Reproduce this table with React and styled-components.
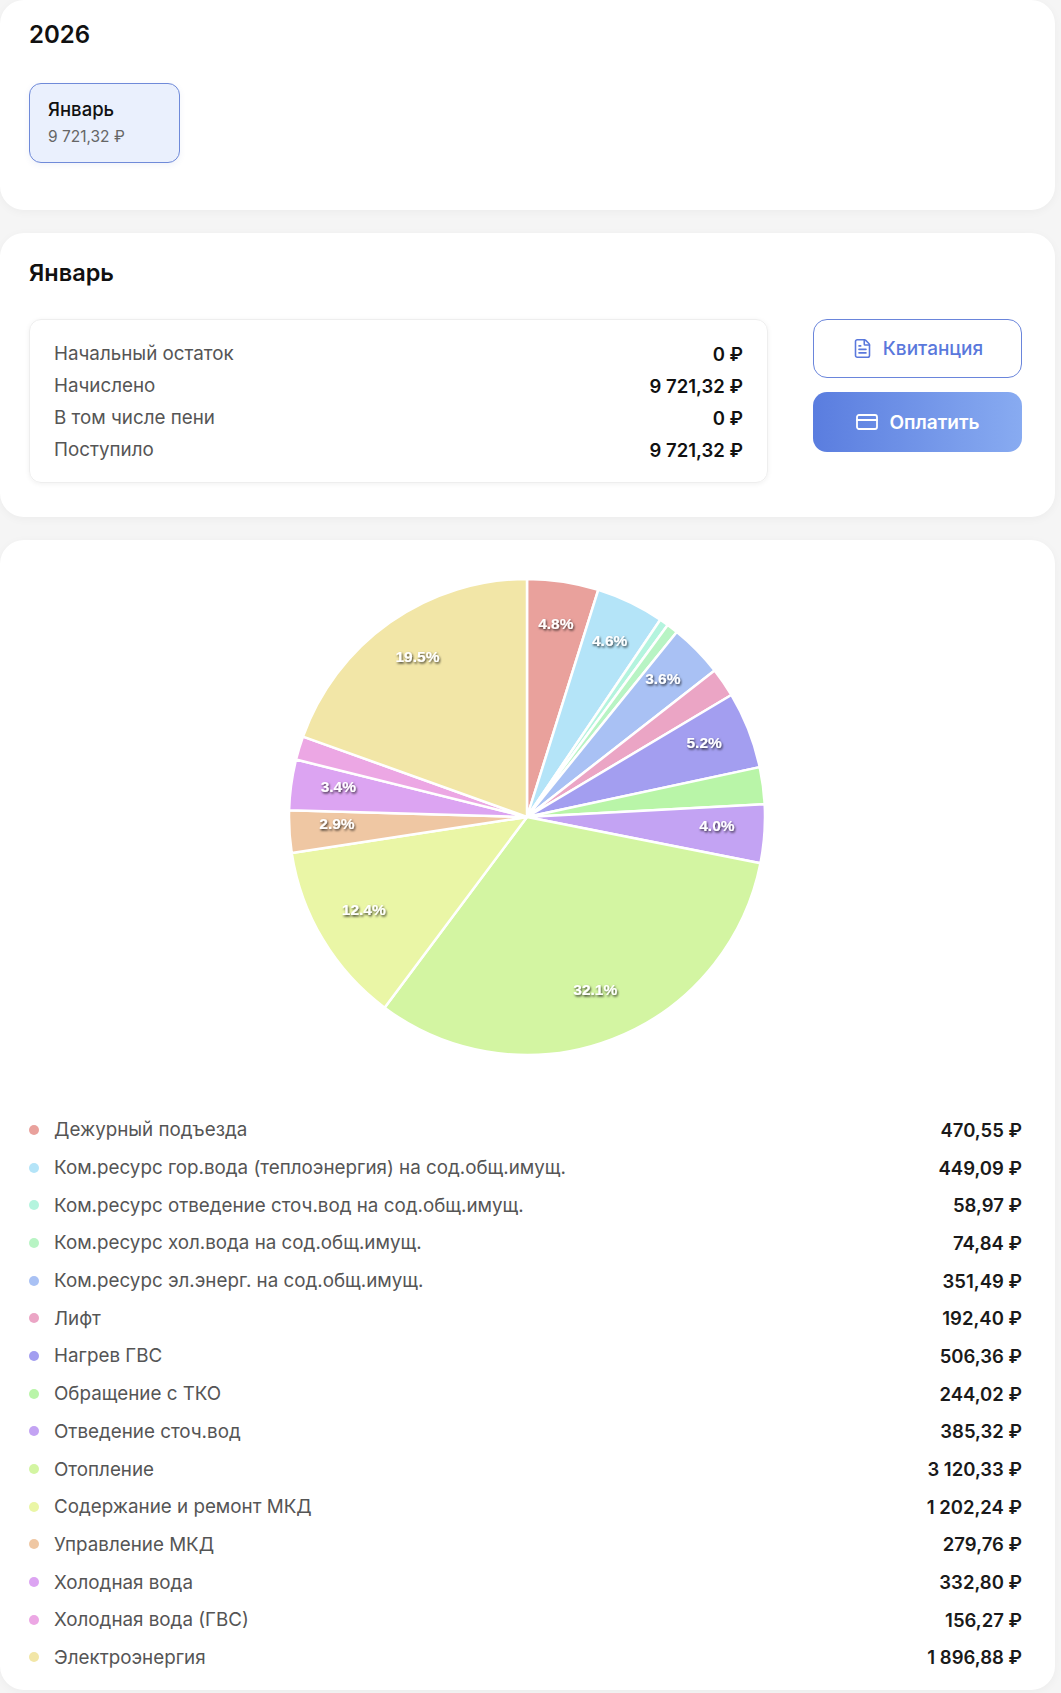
import styled, { createGlobalStyle } from 'styled-components';
import { FileText, CreditCard } from 'lucide-react';

const GlobalStyle = createGlobalStyle`
  body {
    margin: 0;
    background: #f5f5f5;
    font-family: Inter, "Noto Sans", "Liberation Sans", sans-serif;
    color: #111;
  }
`;

const services = [
  { name: 'Дежурный подъезда', value: 470.55, color: '#e9a19c' },
  { name: 'Ком.ресурс гор.вода (теплоэнергия) на сод.общ.имущ.', value: 449.09, color: '#b4e4f8' },
  { name: 'Ком.ресурс отведение сточ.вод на сод.общ.имущ.', value: 58.97, color: '#b4f4de' },
  { name: 'Ком.ресурс хол.вода на сод.общ.имущ.', value: 74.84, color: '#b8f4c4' },
  { name: 'Ком.ресурс эл.энерг. на сод.общ.имущ.', value: 351.49, color: '#a9c1f4' },
  { name: 'Лифт', value: 192.4, color: '#eba5c5' },
  { name: 'Нагрев ГВС', value: 506.36, color: '#a39ef0' },
  { name: 'Обращение с ТКО', value: 244.02, color: '#b9f5a8' },
  { name: 'Отведение сточ.вод', value: 385.32, color: '#c3a3f3' },
  { name: 'Отопление', value: 3120.33, color: '#d3f5a2' },
  { name: 'Содержание и ремонт МКД', value: 1202.24, color: '#eaf6a6' },
  { name: 'Управление МКД', value: 279.76, color: '#efc7a3' },
  { name: 'Холодная вода', value: 332.8, color: '#dca4f2' },
  { name: 'Холодная вода (ГВС)', value: 156.27, color: '#eca7e4' },
  { name: 'Электроэнергия', value: 1896.88, color: '#f2e6a7' },
];

const summary = [
  ['Начальный остаток', '0 ₽'],
  ['Начислено', '9 721,32 ₽'],
  ['В том числе пени', '0 ₽'],
  ['Поступило', '9 721,32 ₽'],
];

const money = (v) =>
  v
    .toFixed(2)
    .replace('.', ',')
    .replace(/\B(?=(\d{3})+(?!\d))/g, ' ') + ' ₽';

function Pie({ data, size = 480, radius = 238 }) {
  const total = data.reduce((s, d) => s + d.value, 0);
  const c = size / 2;
  const pt = (a, r) => [c + r * Math.sin(a), c - r * Math.cos(a)];
  let acc = 0;
  const slices = data.map((d) => {
    const a0 = (acc / total) * Math.PI * 2;
    acc += d.value;
    const a1 = (acc / total) * Math.PI * 2;
    const [x0, y0] = pt(a0, radius);
    const [x1, y1] = pt(a1, radius);
    const large = a1 - a0 > Math.PI ? 1 : 0;
    const pct = (d.value / total) * 100;
    const [lx, ly] = pt((a0 + a1) / 2, radius * 0.8);
    return {
      ...d,
      path: `M${c} ${c} L${x0} ${y0} A${radius} ${radius} 0 ${large} 1 ${x1} ${y1} Z`,
      pct,
      lx,
      ly: ly - 5,
    };
  });
  return (
    <svg width={size} height={size} viewBox={`0 0 ${size} ${size}`}>
      <defs>
        <filter id="lblShadow" x="-20%" y="-40%" width="140%" height="180%">
          <feDropShadow dx="1" dy="1.5" stdDeviation="1.3" floodColor="#000" floodOpacity="0.75" />
        </filter>
      </defs>
      {slices.map((s) => (
        <path key={s.name} d={s.path} fill={s.color} stroke="#fff" strokeWidth="2.5" strokeLinejoin="round" />
      ))}
      {slices
        .filter((s) => s.pct >= 2.7)
        .map((s) => (
          <PieLabel key={s.name} x={s.lx} y={s.ly} filter="url(#lblShadow)">
            {s.pct.toFixed(1)}%
          </PieLabel>
        ))}
    </svg>
  );
}

export default function App() {
  return (
    <>
      <GlobalStyle />
      <Page>
        <Card $pad="20px 33px 47px 29px">
          <Year>2026</Year>
          <MonthChip>
            <MonthName>Январь</MonthName>
            <MonthSum>9 721,32 ₽</MonthSum>
          </MonthChip>
        </Card>

        <Card $pad="26px 33px 34px 29px">
          <Title>Январь</Title>
          <DetailRow>
            <SummaryBox>
              {summary.map(([label, value]) => (
                <SummaryLine key={label}>
                  <span>{label}</span>
                  <b>{value}</b>
                </SummaryLine>
              ))}
            </SummaryBox>
            <Actions>
              <Button>
                <FileText size={21} strokeWidth={1.8} />
                Квитанция
              </Button>
              <Button $primary>
                <CreditCard size={24} strokeWidth={1.8} />
                Оплатить
              </Button>
            </Actions>
          </DetailRow>
        </Card>

        <Card $pad="37px 33px 14px 29px">
          <ChartWrap>
            <Pie data={services} />
          </ChartWrap>
          <Legend>
            {services.map((s) => (
              <LegendRow key={s.name}>
                <Dot $color={s.color} />
                <LegendName>{s.name}</LegendName>
                <LegendValue>{money(s.value)}</LegendValue>
              </LegendRow>
            ))}
          </Legend>
        </Card>
      </Page>
    </>
  );
}

const Page = styled.div`
  display: flex;
  flex-direction: column;
  gap: 23px;
  padding: 0 6px 8px 0;
`;

const Card = styled.section`
  background: #fff;
  border-radius: 24px;
  padding: ${(p) => p.$pad};
  box-shadow: 0 2px 10px rgba(0, 0, 0, 0.04);
`;

const Year = styled.h2`
  margin: 0;
  font-size: 24px;
  line-height: 30px;
  font-weight: 600;
`;

const MonthChip = styled.div`
  margin-top: 33px;
  width: 151px;
  box-sizing: border-box;
  padding: 13px 18px 15px;
  background: #eaf0fd;
  border: 1px solid #6f8ad9;
  border-radius: 12px;
  box-shadow: 0 2px 6px rgba(60, 90, 180, 0.08);
`;

const MonthName = styled.div`
  font-size: 18.5px;
  line-height: 24px;
  font-weight: 500;
  color: #111;
`;

const MonthSum = styled.div`
  margin-top: 6px;
  font-size: 15.5px;
  line-height: 20px;
  color: #666;
`;

const Title = styled.h3`
  margin: 0;
  font-size: 23.5px;
  line-height: 28px;
  font-weight: 600;
`;

const DetailRow = styled.div`
  display: flex;
  align-items: flex-start;
  gap: 45px;
  margin-top: 32px;
`;

const SummaryBox = styled.div`
  flex: 1;
  padding: 18px 24px 16px;
  border: 1px solid #eeeeee;
  border-radius: 12px;
  box-shadow: 0 1px 5px rgba(0, 0, 0, 0.06);
`;

const SummaryLine = styled.div`
  display: flex;
  justify-content: space-between;
  align-items: center;
  font-size: 18.8px;
  line-height: 32px;
  color: #555;

  b {
    font-weight: 600;
    font-size: 18.5px;
    color: #111;
  }
`;

const Actions = styled.div`
  width: 209px;
  display: flex;
  flex-direction: column;
  gap: 14px;
`;

const Button = styled.button`
  display: flex;
  align-items: center;
  justify-content: center;
  gap: 10px;
  height: ${(p) => (p.$primary ? '60px' : '59px')};
  border-radius: 14px;
  font-family: inherit;
  font-size: 19px;
  font-weight: ${(p) => (p.$primary ? 600 : 500)};
  cursor: pointer;
  color: ${(p) => (p.$primary ? '#fff' : '#5a78dc')};
  background: ${(p) => (p.$primary ? 'linear-gradient(90deg, #5a7ddf 0%, #88abf1 100%)' : '#fff')};
  border: ${(p) => (p.$primary ? 'none' : '1px solid #6a85db')};
`;

const ChartWrap = styled.div`
  display: flex;
  justify-content: center;
  padding-left: 2px;
`;

const PieLabel = styled.text`
  font-family: "Liberation Sans", Arial, sans-serif;
  font-size: 15.5px;
  font-weight: 700;
  fill: #fff;
  text-anchor: middle;
  dominant-baseline: central;
`;

const Legend = styled.div`
  margin-top: 54px;
  display: flex;
  flex-direction: column;
`;

const LegendRow = styled.div`
  display: flex;
  align-items: center;
  height: 37.7px;
  font-size: 18.8px;
`;

const Dot = styled.span`
  width: 10px;
  height: 10px;
  border-radius: 50%;
  background: ${(p) => p.$color};
  margin-right: 15px;
  flex-shrink: 0;
`;

const LegendName = styled.span`
  flex: 1;
  color: #555;
`;

const LegendValue = styled.span`
  font-weight: 600;
  font-size: 18.5px;
  color: #1a1a1a;
`;
